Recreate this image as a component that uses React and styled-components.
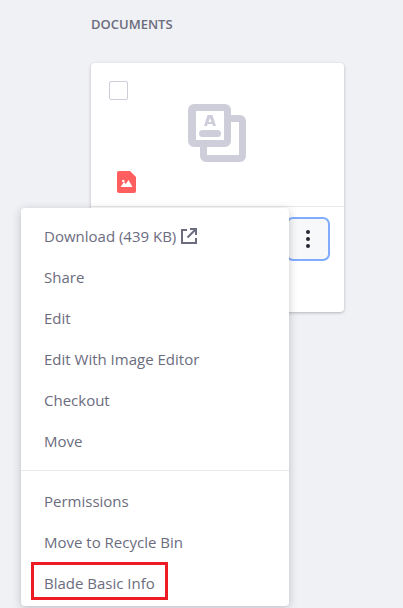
import React from 'react'
import styled, { createGlobalStyle } from 'styled-components'

const GlobalStyle = createGlobalStyle`
  html, body {
    margin: 0;
    height: 100%;
    overflow: hidden;
    background: #f0f1f5;
    font-family: "Open Sans", "Noto Sans", sans-serif;
  }
`

const Page = styled.div`
  position: relative;
  height: 608px;
  padding: 16px 0 0 91px;
  box-sizing: border-box;
  overflow: hidden;
`

const SectionTitle = styled.h2`
  margin: 0 0 31px;
  font-size: 13px;
  line-height: 16px;
  font-weight: 600;
  color: #6b6c7e;
`

const Card = styled.div`
  width: 253px;
  height: 249px;
  background: #fff;
  border-radius: 4px;
  box-shadow: 0 1px 3px rgba(39, 40, 51, 0.3);
`

const CardTop = styled.div`
  height: 144px;
  box-sizing: border-box;
  border-bottom: 1px solid #e7e7ed;
  padding: 18px 18px 0;
  display: grid;
  grid-template-columns: 19px 1fr;
`

const Checkbox = styled.span`
  display: block;
  width: 19px;
  height: 19px;
  box-sizing: border-box;
  border: 1px solid #cdced9;
  border-radius: 2px;
`

const Preview = styled.div`
  display: flex;
  justify-content: center;
  padding: 23px 20px 0 0;
`

const FileBadge = styled.div`
  grid-column: 1 / 3;
  margin: -4px 0 0 8px;
  height: 22px;
`

const CardBottom = styled.div`
  display: flex;
  justify-content: flex-end;
  padding: 10px 14px 0 0;
`

const KebabButton = styled.div`
  width: 44px;
  height: 44px;
  box-sizing: border-box;
  border: 2px solid #80acff;
  border-radius: 7px;
  background: #f7f8f9;
  display: flex;
  align-items: center;
  justify-content: center;
`

const Menu = styled.ul`
  position: absolute;
  left: 21px;
  top: 208px;
  width: 268px;
  height: 398px;
  margin: 0;
  padding: 7px 0 0;
  box-sizing: border-box;
  list-style: none;
  background: #fff;
  border-radius: 4px;
  box-shadow: 0 2px 8px rgba(39, 40, 51, 0.25);
`

const MenuItem = styled.li`
  height: 41px;
  padding-left: 23px;
  display: flex;
  align-items: center;
  gap: 5px;
  font-size: 15px;
  color: #6b6c7e;
`

const Divider = styled.li`
  height: 1px;
  margin: 9px 0 9px;
  background: #e7e7ed;
`

const Highlight = styled.div`
  position: absolute;
  left: 31px;
  top: 562px;
  width: 137px;
  height: 38px;
  box-sizing: border-box;
  border: 3px solid #ed1c24;
`

const CopyIcon = () => (
  <svg width="58" height="58" viewBox="0 0 58 58" fill="#cdced9">
    <path
      fillRule="evenodd"
      d="M6 0h31a6 6 0 0 1 6 6v5h9a6 6 0 0 1 6 6v35a6 6 0 0 1-6 6H18a6 6 0 0 1-6-6v-9H6a6 6 0 0 1-6-6V6a6 6 0 0 1 6-6Zm2 7v29h28V7H8Zm35 11v19a6 6 0 0 1-6 6H19v8h32V18h-8Z"
    />
    <path fillRule="evenodd" d="M19.500 11h5L28 22h-3l-.6-2h-4.800l-.6 2h-3ZM22 14l-1.500 4h3Z" />
    <rect x="11" y="26" width="22" height="7" rx="3.500" />
  </svg>
)

const ImageFileIcon = () => (
  <svg width="19" height="22" viewBox="0 0 19 22">
    <path fill="#ff5f5f" d="M2 0h11l6 6v14a2 2 0 0 1-2 2H2a2 2 0 0 1-2-2V2a2 2 0 0 1 2-2Z" />
    <path fill="#fff" d="M3.500 16l3.500-5 1.800 2 2.700-4 4 7Z" />
    <circle cx="6.300" cy="10" r="1.200" fill="#fff" />
  </svg>
)

const KebabIcon = () => (
  <svg width="4" height="18" viewBox="0 0 4 18" fill="#272833">
    <circle cx="2" cy="2" r="2" />
    <circle cx="2" cy="9" r="2" />
    <circle cx="2" cy="16" r="2" />
  </svg>
)

const ExternalIcon = () => (
  <svg width="16" height="16" viewBox="0 0 16 16" fill="none" stroke="#6b6c7e" strokeWidth="2">
    <path d="M6 2H1v13h14v-5" />
    <path d="M6.500 9.500 14 2M9 1h6v6" />
  </svg>
)

const firstGroup = ['Share', 'Edit', 'Edit With Image Editor', 'Checkout', 'Move']
const secondGroup = ['Permissions', 'Move to Recycle Bin', 'Blade Basic Info']

const App = () => (
  <Page>
    <GlobalStyle />
    <SectionTitle>DOCUMENTS</SectionTitle>
    <Card>
      <CardTop>
        <Checkbox />
        <Preview>
          <CopyIcon />
        </Preview>
        <FileBadge>
          <ImageFileIcon />
        </FileBadge>
      </CardTop>
      <CardBottom>
        <KebabButton>
          <KebabIcon />
        </KebabButton>
      </CardBottom>
    </Card>
    <Menu>
      <MenuItem>
        Download (439 KB)
        <ExternalIcon />
      </MenuItem>
      {firstGroup.map((label) => (
        <MenuItem key={label}>{label}</MenuItem>
      ))}
      <Divider />
      {secondGroup.map((label) => (
        <MenuItem key={label}>{label}</MenuItem>
      ))}
    </Menu>
    <Highlight />
  </Page>
)

export default App
